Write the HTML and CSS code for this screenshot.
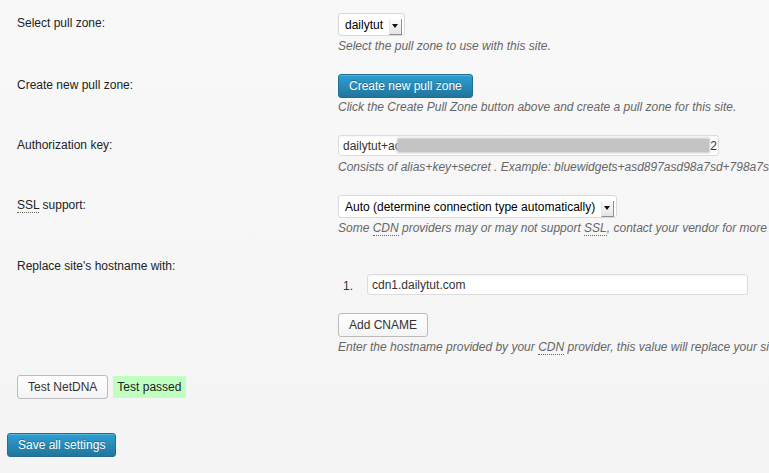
FILE: index.html
```html
<!DOCTYPE html>
<html lang="en">
<head>
<meta charset="utf-8">
<title>CDN settings</title>
<link rel="stylesheet" href="styles.css">
</head>
<body>
<div class="page">
  <div class="form">
    <div class="row">
      <div class="label">Select pull zone:</div>
      <div class="field">
        <div class="select"><span class="select-value">dailytut</span><span class="select-arrow"></span></div>
        <p class="desc">Select the pull zone to use with this site.</p>
      </div>
    </div>

    <div class="row">
      <div class="label label-btn">Create new pull zone:</div>
      <div class="field">
        <button class="btn btn-primary" type="button">Create new pull zone</button>
        <p class="desc desc-tight">Click the Create Pull Zone button above and create a pull zone for this site.</p>
      </div>
    </div>

    <div class="row">
      <div class="label">Authorization key:</div>
      <div class="field">
        <div class="input input-key"><span class="key-start">dailytut+ac</span><span class="key-blur"></span><span class="key-end">2</span></div>
        <p class="desc desc-input">Consists of alias+key+secret . Example: bluewidgets+asd897asd98a7sd+798a7sd9 8a7sd98a7sd9</p>
      </div>
    </div>

    <div class="row">
      <div class="label"><abbr title="Secure Sockets Layer">SSL</abbr> support:</div>
      <div class="field">
        <div class="select"><span class="select-value">Auto (determine connection type automatically)</span><span class="select-arrow"></span></div>
        <p class="desc">Some <abbr title="Content Delivery Network">CDN</abbr> providers may or may not support <abbr title="Secure Sockets Layer">SSL</abbr>, contact your vendor for more information.</p>
      </div>
    </div>

    <div class="row">
      <div class="label">Replace site's hostname with:</div>
      <div class="field">
        <ol class="cname-list">
          <li class="cname-item"><span class="cname-num">1.</span><div class="input input-cname">cdn1.dailytut.com</div></li>
        </ol>
        <button class="btn btn-secondary btn-add" type="button">Add CNAME</button>
        <p class="desc">Enter the hostname provided by your <abbr title="Content Delivery Network">CDN</abbr> provider, this value will replace your site's hostname in the HTML.</p>
      </div>
    </div>

    <div class="test-row">
      <button class="btn btn-secondary" type="button">Test NetDNA</button>
      <span class="status-ok">Test passed</span>
    </div>
  </div>

  <div class="save-row">
    <button class="btn btn-primary" type="button">Save all settings</button>
  </div>
</div>
</body>
</html>
```

FILE: styles.css
```css
html {
  overflow: hidden;
}

body {
  margin: 0;
  height: 473px;
  background: linear-gradient(to bottom, #f8f8f8, #f4f4f4);
  font-family: "Liberation Sans", Arial, Helvetica, sans-serif;
  font-size: 12px;
  line-height: 16px;
  color: #222;
}

.page {
  padding: 3px 0 0 7px;
}

.form {
  padding-left: 10px;
}

.row {
  display: grid;
  grid-template-columns: 321px 1fr;
  padding: 10px 0;
}

.label {
  padding-top: 2px;
  white-space: nowrap;
}

.label-btn {
  padding-top: 3px;
}

.field {
  display: flex;
  flex-direction: column;
  align-items: flex-start;
  min-width: 0;
}

abbr {
  text-decoration: none;
  border-bottom: 1px dotted #666;
}

.desc {
  margin: 2px 0 0;
  font-style: italic;
  color: #666;
  white-space: nowrap;
}

.desc-tight {
  margin-top: 1px;
}

.desc-input {
  margin-top: 3px;
}

/* select */
.select {
  display: flex;
  align-items: stretch;
  height: 23px;
  box-sizing: border-box;
  border: 1px solid #d9d9d9;
  border-radius: 3px;
  background: #fff;
  padding: 0 2px 0 6px;
  color: #000;
}

.select-value {
  align-self: center;
  white-space: nowrap;
  padding-top: 1px;
}

.select-arrow {
  position: relative;
  align-self: flex-end;
  width: 13px;
  height: 16px;
  margin-left: 6px;
  box-sizing: border-box;
  background: linear-gradient(to bottom, #fdfdfd, #e4e4e4);
  border-left: 1px solid #e8e8e8;
  border-right: 1px solid #8f8f8f;
  border-bottom: 1px solid #8f8f8f;
}

.select-arrow::after {
  content: "";
  position: absolute;
  left: 2px;
  top: 5px;
  border-left: 3.5px solid transparent;
  border-right: 3.5px solid transparent;
  border-top: 4px solid #111;
}

/* inputs */
.input {
  display: flex;
  align-items: center;
  box-sizing: border-box;
  width: 381px;
  height: 21px;
  border: 1px solid #dcdcdc;
  border-radius: 3px;
  background: #fff;
  box-shadow: inset 0 1px 2px rgba(0, 0, 0, 0.05);
  padding: 0 1px 0 4px;
  color: #333;
  white-space: nowrap;
  overflow: hidden;
}

.key-start {
  flex: none;
}

.key-blur {
  flex: 1;
  height: 13px;
  margin-left: -3px;
  background: #c3c3c3;
  box-shadow: 0 0 2px 1px #c8c8c8;
}

.key-end {
  flex: none;
  margin-left: 1px;
}

.cname-list {
  list-style: none;
  margin: 18px 0 0;
  padding: 0;
}

.cname-item {
  display: flex;
  align-items: center;
}

.cname-num {
  width: 24px;
  padding-left: 5px;
  padding-top: 2px;
  color: #333;
}

.input-cname {
  padding-top: 1px;
}

/* buttons */
.btn {
  box-sizing: border-box;
  height: 24px;
  padding: 0 10px;
  border-radius: 3px;
  font-family: "Liberation Sans", Arial, Helvetica, sans-serif;
  font-size: 12px;
  line-height: 22px;
  cursor: pointer;
  white-space: nowrap;
}

.btn-primary {
  border: 1px solid #1f6f93;
  background: linear-gradient(to bottom, #2e9fd2, #21759b);
  color: #fff;
  text-shadow: 0 -1px 0 rgba(0, 0, 0, 0.25);
  box-shadow: inset 0 1px 0 rgba(120, 200, 230, 0.5);
}

.btn-secondary {
  border: 1px solid #bbb;
  background: linear-gradient(to bottom, #fefefe, #f4f4f4);
  color: #333;
}

.btn-add {
  margin-top: 18px;
}

.test-row {
  display: flex;
  align-items: center;
  gap: 5px;
  margin-top: 10px;
}

.status-ok {
  height: 22px;
  line-height: 22px;
  padding: 0 5px 0 4px;
  background: #c1ffc1;
  color: #222;
}

.save-row {
  margin-top: 34px;
}
```
